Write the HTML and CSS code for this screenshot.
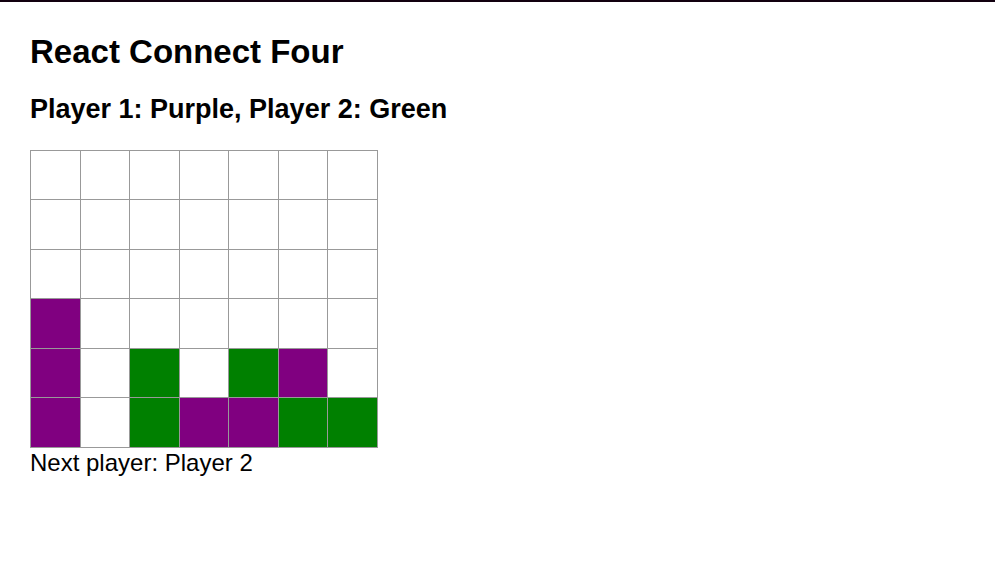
FILE: index.html
```html
<!DOCTYPE html>
<html lang="en">
<head>
<meta charset="utf-8">
<title>React Connect Four</title>
<link rel="stylesheet" href="styles.css">
</head>
<body>
<main class="game">
  <h1 class="title">React Connect Four</h1>
  <h2 class="players">Player 1: Purple, Player 2: Green</h2>
  <div class="board" id="board"></div>
  <p class="status">Next player: Player 2</p>
</main>
<script src="board.js"></script>
</body>
</html>
```
FILE: styles.css
```css
* {
  box-sizing: border-box;
}

body {
  margin: 0;
  border-top: 2px solid #12000f;
  background: #fff;
  color: #000;
  font-family: "Liberation Sans", Arial, sans-serif;
  font-size: 24px;
}

.game {
  padding: 28px 30px;
}

.title {
  margin: 0;
  font-size: 33px;
  line-height: 44px;
}

.players {
  margin: 16px 0 22px;
  font-size: 27px;
  line-height: 38px;
}

.board {
  display: grid;
  grid-template-columns: repeat(3, 50px 49px) 50px;
  grid-template-rows: repeat(3, 49px 50px);
  width: max-content;
  padding: 1px 0 0 1px;
  background: #999;
}

.square {
  margin: 0;
  padding: 0;
  border: 0 solid #999;
  border-width: 0 1px 1px 0;
  border-radius: 0;
  background: #fff;
}

.purple {
  background: #800080;
}

.green {
  background: #008000;
}

.status {
  margin: 0;
  line-height: 30px;
}
```
FILE: board.js
```js
const rows = [
  ".......",
  ".......",
  ".......",
  "P......",
  "P.G.GP.",
  "P.GPPGG"
];
const colours = { P: "purple", G: "green" };
const board = document.getElementById("board");

rows.forEach((row, r) => {
  [...row].forEach((cell, c) => {
    const square = document.createElement("button");
    const colour = colours[cell];
    square.type = "button";
    square.className = colour ? "square " + colour : "square";
    square.setAttribute("aria-label", `Row ${r + 1}, column ${c + 1}: ${colour || "empty"}`);
    board.append(square);
  });
});
```
